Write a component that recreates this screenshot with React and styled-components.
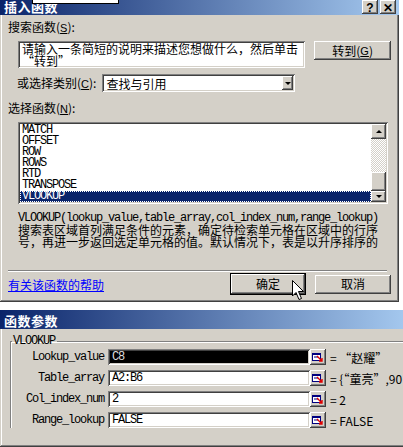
import styled, { createGlobalStyle } from "styled-components";

const GlobalStyle = createGlobalStyle`
  body {
    margin: 0;
    background: #fff;
    overflow: hidden;
  }
  * { box-sizing: border-box; }
`;

const CN = `"Noto Sans CJK SC", "Liberation Sans", sans-serif`;
const MONO = `"Liberation Mono", "Noto Sans CJK SC", monospace`;

const raised = `
  box-shadow: inset -1px -1px #404040, inset 1px 1px #ffffff,
    inset -2px -2px #808080, inset 2px 2px #d4d0c8;
`;
const sunken = `
  box-shadow: inset 1px 1px #808080, inset -1px -1px #ffffff,
    inset 2px 2px #404040, inset -2px -2px #d4d0c8;
`;

const Page = styled.div`
  width: 403px;
  height: 447px;
  display: flex;
  flex-direction: column;
  font-family: ${CN};
  font-size: 12px;
  color: #000;
`;

const Dialog = styled.div`
  position: relative;
  width: ${(p) => p.$width}px;
  height: ${(p) => p.$height}px;
  background: #d4d0c8;
  box-shadow: inset -1px -1px #404040, inset 1px 1px #d4d0c8,
    inset -2px -2px #808080, inset 2px 2px #ffffff;
  display: flex;
  flex-direction: column;
  padding: 0 2px;
  overflow: hidden;
`;

const TitleBar = styled.div`
  height: ${(p) => p.$height}px;
  margin: 0 -2px;
  padding: 0 3px 0 4px;
  background: linear-gradient(to right, #0a246a, #a6caf0);
  display: flex;
  align-items: flex-end;
  justify-content: space-between;
  flex-shrink: 0;
`;

const TitleText = styled.span`
  color: #fff;
  font-weight: bold;
  font-size: 13px;
  line-height: 17px;
  letter-spacing: 0.5px;
`;

const TitleButtons = styled.div`
  display: flex;
  gap: 2px;
  padding-bottom: 1px;
`;

const TitleButton = styled.div`
  width: 16px;
  height: 14px;
  background: #d4d0c8;
  ${raised}
  display: flex;
  align-items: flex-end;
  justify-content: center;
  font-family: "Liberation Sans", sans-serif;
  font-weight: bold;
  font-size: 12px;
  line-height: 12px;
`;

const Scrap = styled.div`
  position: absolute;
  left: 32px;
  top: 0;
  width: 87px;
  height: 4px;
  background: #fff;
  border: 1px solid #000;
  border-top: none;
`;

const Body = styled.div`
  display: flex;
  flex-direction: column;
  padding: 0 6px;
`;

const Label = styled.div`
  line-height: 14px;
  margin-top: ${(p) => p.$top || 0}px;
  margin-left: ${(p) => p.$left || 0}px;
  white-space: nowrap;
`;

const Key = styled.span`
  text-decoration: underline;
  font-family: "Liberation Sans", sans-serif;
  font-size: 11px;
`;

const Row = styled.div`
  display: flex;
  align-items: ${(p) => p.$align || "flex-start"};
  margin-top: ${(p) => p.$top || 0}px;
  margin-left: ${(p) => p.$left || 0}px;
`;

const SearchBox = styled.div`
  width: 288px;
  height: 27px;
  background: #fff;
  ${sunken}
  padding: 2px 4px;
  line-height: 12px;
  white-space: nowrap;
  overflow: hidden;
`;

const Button = styled.div`
  width: ${(p) => p.$w}px;
  height: ${(p) => p.$h || 19}px;
  margin-left: ${(p) => p.$gap || 0}px;
  background: #d4d0c8;
  ${raised}
  ${(p) => (p.$default ? "outline: 1px solid #000;" : "")}
  display: flex;
  align-items: center;
  justify-content: center;
  line-height: 12px;
`;

const Select = styled.div`
  width: 193px;
  height: 18px;
  margin-left: 6px;
  background: #fff;
  ${sunken}
  display: flex;
  align-items: center;
  justify-content: space-between;
  padding: 2px 2px 2px 4px;
`;

const DropButton = styled.div`
  width: 11px;
  height: 14px;
  background: #d4d0c8;
  ${raised}
  display: flex;
  align-items: center;
  justify-content: center;
`;

const Arrow = styled.div`
  width: 0;
  height: 0;
  border-left: 3px solid transparent;
  border-right: 3px solid transparent;
  ${(p) => (p.$up ? "border-bottom: 3px solid #000;" : "border-top: 3px solid #000;")}
`;

const List = styled.div`
  width: 370px;
  height: 82px;
  margin-left: 10px;
  margin-top: 6px;
  background: #fff;
  ${sunken}
  padding: 2px;
  display: flex;
`;

const Items = styled.div`
  flex: 1;
  display: flex;
  flex-direction: column;
  overflow: hidden;
  padding-top: 1px;
`;

const Item = styled.div`
  font-family: ${MONO};
  font-size: 12px;
  letter-spacing: -1.2px;
  line-height: 11px;
  padding-left: 2px;
  height: 11px;
  flex-shrink: 0;
  ${(p) =>
    p.$selected
      ? "background: #0a246a; color: #fff; outline: 1px dotted #fff; outline-offset: -1px;"
      : ""}
`;

const ScrollBar = styled.div`
  width: 15px;
  display: flex;
  flex-direction: column;
  background: repeating-conic-gradient(#ffffff 0 25%, #d4d0c8 0 50%) 0 0 / 2px 2px;
`;

const ScrollButton = styled.div`
  height: ${(p) => p.$h}px;
  margin-top: ${(p) => p.$top || 0}px;
  background: #d4d0c8;
  ${raised}
  display: flex;
  align-items: center;
  justify-content: center;
  flex-shrink: 0;
`;

const Description = styled.div`
  margin: 8px 0 0 10px;
  line-height: 12px;
  white-space: nowrap;
`;

const Signature = styled.div`
  font-family: ${MONO};
  font-size: 12px;
  letter-spacing: -1.2px;
  line-height: 12px;
`;

const Separator = styled.div`
  margin-top: 22px;
  height: 2px;
  border-top: 1px solid #808080;
  border-bottom: 1px solid #ffffff;
  margin-right: 4px;
`;

const Footer = styled.div`
  display: flex;
  align-items: center;
  margin-top: 2px;
`;

const HelpLink = styled.a`
  color: #0000ff;
  text-decoration: underline;
  margin-right: auto;
  cursor: pointer;
`;

const Cursor = styled.svg`
  position: absolute;
  left: 292px;
  top: 280px;
`;

const Gap = styled.div`
  height: 9px;
`;

const GroupBox = styled.fieldset`
  margin: 6px 4px 0 8px;
  padding: 2px 0 0 0;
  border: none;
  border-top: 1px solid #808080;
  border-left: 1px solid #808080;
  box-shadow: inset 1px 1px #ffffff;
  display: flex;
  flex-direction: column;
  gap: 5px;
`;

const Legend = styled.legend`
  font-family: ${MONO};
  font-size: 12px;
  letter-spacing: -1.2px;
  line-height: 12px;
  padding: 0 2px 0 1px;
  margin-left: 1px;
`;

const ParamRow = styled.div`
  display: flex;
  align-items: center;
  height: 16px;
`;

const ParamLabel = styled.div`
  width: 97px;
  text-align: right;
  font-family: ${MONO};
  font-size: 12px;
  letter-spacing: -1.2px;
  padding-right: 4px;
`;

const ParamInput = styled.div`
  width: 202px;
  height: 16px;
  background: ${(p) => (p.$active ? "#000" : "#fff")};
  color: ${(p) => (p.$active ? "#ddd" : "#000")};
  ${sunken}
  font-family: ${MONO};
  font-size: 12px;
  letter-spacing: -1.2px;
  line-height: 14px;
  padding: 1px 4px;
`;

const RefButton = styled.div`
  width: 16px;
  height: 16px;
  background: #d4d0c8;
  ${raised}
  display: flex;
  align-items: center;
  justify-content: center;
`;

const ParamValue = styled.div`
  margin-left: 4px;
  white-space: nowrap;
  font-size: 12px;
`;

const RefIcon = () => (
  <svg width="12" height="10" viewBox="0 0 12 10">
    <rect x="0.5" y="1.5" width="8" height="7" fill="#fff" stroke="#000080" />
    <rect x="0" y="1" width="9" height="2" fill="#000080" />
    <line x1="2" y1="5" x2="6" y2="5" stroke="#000080" />
    <path d="M5 4 L10 9 M7 9 H10 V6" stroke="#e00000" strokeWidth="1.4" fill="none" />
  </svg>
);

const functions = ["MATCH", "OFFSET", "ROW", "ROWS", "RTD", "TRANSPOSE", "VLOOKUP"];

const params = [
  { name: "Lookup_value", value: "C8", result: "= “赵耀”", active: true },
  { name: "Table_array", value: "A2:B6", result: "= {“童亮”,90" },
  { name: "Col_index_num", value: "2", result: "= 2" },
  { name: "Range_lookup", value: "FALSE", result: "= FALSE" },
];

const App = () => {
  return (
    <Page>
      <GlobalStyle />
      <Dialog $width={399} $height={309}>
        <TitleBar $height={15}>
          <TitleText>插入函数</TitleText>
          <TitleButtons>
            <TitleButton>?</TitleButton>
            <TitleButton>✕</TitleButton>
          </TitleButtons>
        </TitleBar>
        <Scrap />
        <Body>
          <Label $top={5}>
            搜索函数(<Key>S</Key>):
          </Label>
          <Row $top={6} $left={10}>
            <SearchBox>
              请输入一条简短的说明来描述您想做什么，然后单击
              <br />
              “转到”
            </SearchBox>
            <Button $w={77} $h={19} $gap={9}>
              转到(<Key>G</Key>)
            </Button>
          </Row>
          <Row $top={6} $left={9} $align="center">
            <Label>
              或选择类别(<Key>C</Key>):
            </Label>
            <Select>
              <span>查找与引用</span>
              <DropButton>
                <Arrow />
              </DropButton>
            </Select>
          </Row>
          <Label $top={9}>
            选择函数(<Key>N</Key>):
          </Label>
          <List>
            <Items>
              {functions.map((f) => (
                <Item key={f} $selected={f === "VLOOKUP"}>
                  {f}
                </Item>
              ))}
            </Items>
            <ScrollBar>
              <ScrollButton $h={15}>
                <Arrow $up />
              </ScrollButton>
              <ScrollButton $h={19} $top={33} />
              <ScrollButton $h={11}>
                <Arrow />
              </ScrollButton>
            </ScrollBar>
          </List>
          <Description>
            <Signature>VLOOKUP(lookup_value,table_array,col_index_num,range_lookup)</Signature>
            搜索表区域首列满足条件的元素，确定待检索单元格在区域中的行序
            <br />
            号，再进一步返回选定单元格的值。默认情况下，表是以升序排序的
          </Description>
          <Separator />
          <Footer>
            <HelpLink>有关该函数的帮助</HelpLink>
            <Button $w={74} $h={20} $default>
              确定
            </Button>
            <Button $w={76} $h={19} $gap={10}>
              取消
            </Button>
          </Footer>
        </Body>
        <Cursor width="13" height="21" viewBox="0 0 13 21">
          <path
            d="M0.5 0.5 V16 L4 12.5 L7 19.5 L9.5 18.5 L6.5 11.5 H11.5 Z"
            fill="#fff"
            stroke="#000"
          />
        </Cursor>
      </Dialog>
      <Gap />
      <Dialog $width={410} $height={140}>
        <TitleBar $height={19}>
          <TitleText>函数参数</TitleText>
        </TitleBar>
        <GroupBox>
          <Legend>VLOOKUP</Legend>
          {params.map((p) => (
            <ParamRow key={p.name}>
              <ParamLabel>{p.name}</ParamLabel>
              <ParamInput $active={p.active}>{p.value}</ParamInput>
              <RefButton>
                <RefIcon />
              </RefButton>
              <ParamValue>{p.result}</ParamValue>
            </ParamRow>
          ))}
        </GroupBox>
      </Dialog>
    </Page>
  );
};

export default App;
